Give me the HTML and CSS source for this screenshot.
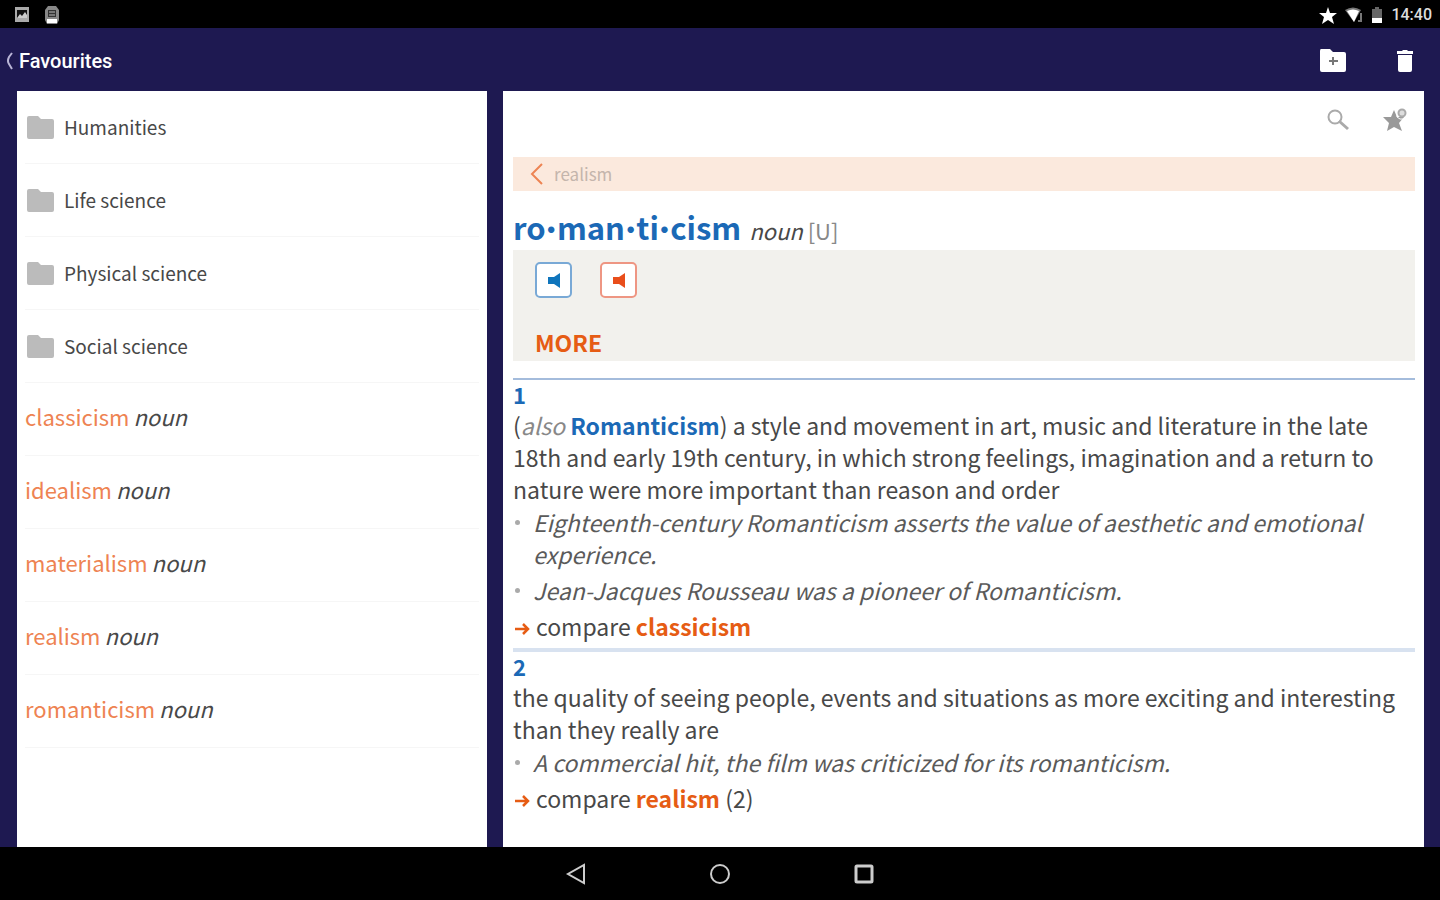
FILE: index.html
```
<!DOCTYPE html>
<html lang="en">
<head>
    <meta charset="UTF-8">
    <meta name="viewport" content="width=device-width, initial-scale=1.0">
    <title>Favourites</title>
    <link rel="stylesheet" href="styles.css">
</head>
<body>
    <div class="status-bar">
        <div class="status-group">
            <svg width="16" height="18" viewBox="0 0 16 18"><path d="M1 1h14v15H1z" fill="#aaa"/><path d="M3 4h10v8H3z" fill="#111"/><path d="M3 12l3-4 2 2 3-4 2 3v3z" fill="#ccc"/></svg>
            <svg width="16" height="20" viewBox="0 0 16 20"><path d="M4 1h8l3 4v10l-2 4H3l-2-4V5z" fill="#888"/><path d="M4 5h8v7H4z" fill="#333"/><path d="M5 7h6M5 10h6" stroke="#bbb"/><path d="M3 14h10v4H3z" fill="#fff"/></svg>
        </div>
        <div class="status-group status-right">
            <svg width="18" height="17" viewBox="0 0 18 17"><path d="M9 0l2 6h7l-5 4 2 7-6-4-6 4 2-7-5-4h7z" fill="#fff"/></svg>
            <svg width="18" height="16" viewBox="0 0 18 16"><path d="M0 3Q8-2 16 3L9 15z" fill="#777"/><path d="M2 4Q8 1 14 4L9 15z" fill="#fff"/><path d="M16 6v8h-3" fill="none" stroke="#777" stroke-width="2"/></svg>
            <svg width="12" height="18" viewBox="0 0 12 18"><path d="M4 1h4v2h3v14H1V3h3z" fill="#666"/><path d="M1 12h10v5H1z" fill="#fff"/></svg>
            <span class="clock">14:40</span>
        </div>
    </div>

    <header>
        <a href="#" class="back">
            <svg width="8" height="18" viewBox="0 0 8 18"><path d="M7 1L4 5Q2 9 4 12L7 17" fill="none" stroke="#b9b5d6" stroke-width="2"/></svg>
            Favourites
        </a>
        <div class="actions">
            <button type="button" aria-label="New folder">
                <svg width="26" height="23" viewBox="0 0 26 23"><path d="M1 0h9l3 3h11q2 0 2 2v16q0 2-2 2H2q-2 0-2-2V2q0-2 1-2z" fill="#fff"/><path d="M13 8v8M9 12h9" stroke="#777" stroke-width="2"/></svg>
            </button>
            <button type="button" aria-label="Delete">
                <svg width="18" height="22" viewBox="0 0 18 22"><path d="M1 1h5l1-1h4l1 1h5v3H1zM2 5h14v15q0 2-2 2H4q-2 0-2-2z" fill="#fff"/></svg>
            </button>
        </div>
    </header>

    <main>
        <ul class="list">
            <li><a href="#"><svg class="folder" width="27" height="23" viewBox="0 0 27 23"><path d="M2 0h9l3 3h11q2 0 2 2v16q0 2-2 2H2q-2 0-2-2V2q0-2 2-2z"/></svg>Humanities</a></li>
            <li><a href="#"><svg class="folder" width="27" height="23" viewBox="0 0 27 23"><path d="M2 0h9l3 3h11q2 0 2 2v16q0 2-2 2H2q-2 0-2-2V2q0-2 2-2z"/></svg>Life science</a></li>
            <li><a href="#"><svg class="folder" width="27" height="23" viewBox="0 0 27 23"><path d="M2 0h9l3 3h11q2 0 2 2v16q0 2-2 2H2q-2 0-2-2V2q0-2 2-2z"/></svg>Physical science</a></li>
            <li><a href="#"><svg class="folder" width="27" height="23" viewBox="0 0 27 23"><path d="M2 0h9l3 3h11q2 0 2 2v16q0 2-2 2H2q-2 0-2-2V2q0-2 2-2z"/></svg>Social science</a></li>
            <li><a href="#" class="word"><span>classicism</span> <em>noun</em></a></li>
            <li><a href="#" class="word"><span>idealism</span> <em>noun</em></a></li>
            <li><a href="#" class="word"><span>materialism</span> <em>noun</em></a></li>
            <li><a href="#" class="word"><span>realism</span> <em>noun</em></a></li>
            <li><a href="#" class="word"><span>romanticism</span> <em>noun</em></a></li>
        </ul>

        <article class="entry">
            <div class="tools">
                <button type="button" aria-label="Search">
                    <svg width="22" height="22" viewBox="0 0 22 22"><circle cx="8" cy="8" r="6.5" fill="none" stroke="#aaa" stroke-width="2"/><path d="M12 12l9 8" stroke="#aaa" stroke-width="3"/></svg>
                </button>
                <button type="button" aria-label="Favourite">
                    <svg width="24" height="24" viewBox="0 0 24 24"><path d="M11 2l3 7h7l-5 6 3 8-8-4-7 4 2-8-6-6h8z" fill="#999"/><path d="M14 0v9l3 2h5" fill="none" stroke="#fff" stroke-width="1"/><circle cx="19" cy="5" r="3.5" fill="#ddd" stroke="#aaa" stroke-width="2"/></svg>
                </button>
            </div>

            <a href="#" class="previous">
                <svg width="14" height="24" viewBox="0 0 14 24"><path d="M12 2L2 12l10 10" fill="none" stroke="#ed8453" stroke-width="2"/></svg>
                realism
            </a>

            <div class="headword">
                <h1>ro<i>·</i>man<i>·</i>ti<i>·</i>cism</h1>
                <p><em>noun</em> <span>[U]</span></p>
            </div>

            <div class="sound">
                <div class="speakers">
                    <button type="button" class="speaker british" aria-label="British pronunciation">
                        <svg width="12" height="15" viewBox="0 0 12 15"><path d="M0 4h6l6-4v15l-6-4H0z" fill="currentColor"/></svg>
                    </button>
                    <button type="button" class="speaker american" aria-label="American pronunciation">
                        <svg width="12" height="15" viewBox="0 0 12 15"><path d="M0 4h6l6-4v15l-6-4H0z" fill="currentColor"/></svg>
                    </button>
                </div>
                <button type="button" class="more">MORE</button>
            </div>

            <section class="sense">
                <h2>1</h2>
                <p>(<em>also</em> <b>Romanticism</b>) a style and movement in art, music and literature in the late 18th and early 19th century, in which strong feelings, imagination and a return to nature were more important than reason and order</p>
                <ul class="examples">
                    <li>Eighteenth-century Romanticism asserts the value of aesthetic and emotional experience.</li>
                    <li>Jean-Jacques Rousseau was a pioneer of Romanticism.</li>
                </ul>
                <p class="compare"><svg width="16" height="14" viewBox="0 0 16 14"><path d="M0 7h13M8 2l5 5-5 5" fill="none" stroke="#e65c14" stroke-width="2.5"/></svg>compare <a href="#">classicism</a></p>
            </section>

            <section class="sense second">
                <h2>2</h2>
                <p>the quality of seeing people, events and situations as more exciting and interesting than they really are</p>
                <ul class="examples">
                    <li>A commercial hit, the film was criticized for its romanticism.</li>
                </ul>
                <p class="compare"><svg width="16" height="14" viewBox="0 0 16 14"><path d="M0 7h13M8 2l5 5-5 5" fill="none" stroke="#e65c14" stroke-width="2.5"/></svg>compare <a href="#">realism</a> (2)</p>
            </section>
        </article>
    </main>

    <nav>
        <button type="button" aria-label="Back">
            <svg width="24" height="24" viewBox="0 0 24 24"><path d="M20 3v18L4 12z" fill="none" stroke="#ccc" stroke-width="2"/></svg>
        </button>
        <button type="button" aria-label="Home">
            <svg width="24" height="24" viewBox="0 0 24 24"><circle cx="12" cy="12" r="9" fill="none" stroke="#ccc" stroke-width="2"/></svg>
        </button>
        <button type="button" aria-label="Recent apps">
            <svg width="24" height="24" viewBox="0 0 24 24"><rect x="4" y="4" width="16" height="16" rx="1" fill="none" stroke="#ccc" stroke-width="3"/></svg>
        </button>
    </nav>
</body>
</html>
```
FILE: styles.css
```
* {
    box-sizing: border-box;
}

body {
    display: flex;
    flex-direction: column;
    min-height: 100vh;
    margin: 0;
    background-color: #1e1951;
    color: #484848;
    font-family: "Noto Sans CJK SC", "Noto Sans", sans-serif;
    font-size: 23px;
    line-height: 32px;
}

a {
    color: inherit;
    text-decoration: none;
}

button {
    display: flex;
    align-items: center;
    justify-content: center;
    padding: 0;
    border: none;
    background: none;
    font: inherit;
    cursor: pointer;
}

ul {
    margin: 0;
    padding: 0;
    list-style: none;
}

svg {
    flex-shrink: 0;
}

.status-bar {
    display: flex;
    justify-content: space-between;
    align-items: center;
    height: 28px;
    padding: 2px 8px 0 14px;
    background-color: #000;
}

.status-group {
    display: flex;
    align-items: center;
    gap: 14px;
}

.status-right {
    gap: 8px;
}

.clock {
    color: #ddd;
    font-family: Roboto, sans-serif;
    font-size: 16px;
    font-weight: 500;
}

header {
    display: flex;
    justify-content: space-between;
    align-items: center;
    height: 63px;
    padding: 2px 26px 0 5px;
}

.back {
    display: flex;
    align-items: center;
    gap: 6px;
    color: #fff;
    font-family: Roboto, sans-serif;
    font-size: 20px;
    font-weight: 500;
}

.actions {
    display: flex;
    gap: 50px;
}

main {
    display: grid;
    grid-template-columns: 470fr 921fr;
    gap: 16px;
    flex: 1;
    padding: 0 16px 0 17px;
}

.list {
    padding: 0 8px;
    background-color: #fff;
}

.list li {
    border-bottom: 1px solid #f6f6f6;
}

.list a {
    display: flex;
    align-items: center;
    gap: 10px;
    height: 72px;
    padding-left: 2px;
    font-size: 19px;
}

.list .word {
    gap: 4px;
    padding: 0 0 6px;
    font-size: 22px;
}

.list .word span {
    color: #ee8352;
}

.folder {
    fill: #bbb;
}

.entry {
    padding: 0 9px 0 10px;
    background-color: #fff;
}

.tools {
    display: flex;
    justify-content: flex-end;
    align-items: center;
    gap: 34px;
    height: 66px;
    padding: 0 8px 8px 0;
}

.previous {
    display: flex;
    align-items: center;
    gap: 10px;
    height: 34px;
    padding-left: 17px;
    background-color: #fbe9dd;
    color: #c4b5ac;
    font-size: 17px;
}

.headword {
    display: flex;
    align-items: baseline;
    gap: 8px;
    padding: 14px 0 2px;
}

.headword h1 {
    margin: 0;
    color: #1b69b6;
    font-size: 31px;
    line-height: 43px;
}

.headword i {
    padding: 0 1px;
    font-family: Lato, sans-serif;
    font-size: 34px;
    font-style: normal;
    line-height: 1;
}

.headword p {
    margin: 0;
    font-size: 22px;
}

.headword span {
    color: #888;
}

.sound {
    padding: 12px 22px 3px;
    background-color: #f2f1ed;
}

.speakers {
    display: flex;
    gap: 28px;
    margin-bottom: 28px;
}

.speaker {
    width: 37px;
    height: 36px;
    border: 2px solid;
    border-radius: 5px;
    background-color: #fff;
}

.british {
    border-color: #79a9d6;
    color: #0f75bc;
}

.american {
    border-color: #ee9683;
    color: #e94e1b;
}

.more {
    color: #e65c14;
    font-weight: 700;
}

.sense {
    margin-top: 17px;
    border-top: 2px solid #a4bcdc;
}

.sense h2 {
    margin: 0;
    color: #1b69b6;
    font-size: 22px;
    line-height: 29px;
}

.sense p {
    margin: 0;
}

.sense em {
    color: #888;
}

.sense b {
    color: #1b69b6;
}

.examples li {
    display: flex;
    gap: 13px;
    margin: 1px 0 4px;
    color: #5a5a5a;
    font-style: italic;
}

.examples li::before {
    content: "";
    flex-shrink: 0;
    width: 5px;
    height: 5px;
    margin: 14px 0 0 2px;
    border-radius: 50%;
    background-color: #aaa;
}

.compare svg {
    margin: 0 5px 0 2px;
}

.compare a {
    color: #e65c14;
    font-weight: 700;
}

.second {
    margin-top: 6px;
    border-top: 4px solid #d8e2f0;
}

nav {
    display: flex;
    justify-content: center;
    align-items: center;
    gap: 120px;
    height: 53px;
    background-color: #000;
}
```
